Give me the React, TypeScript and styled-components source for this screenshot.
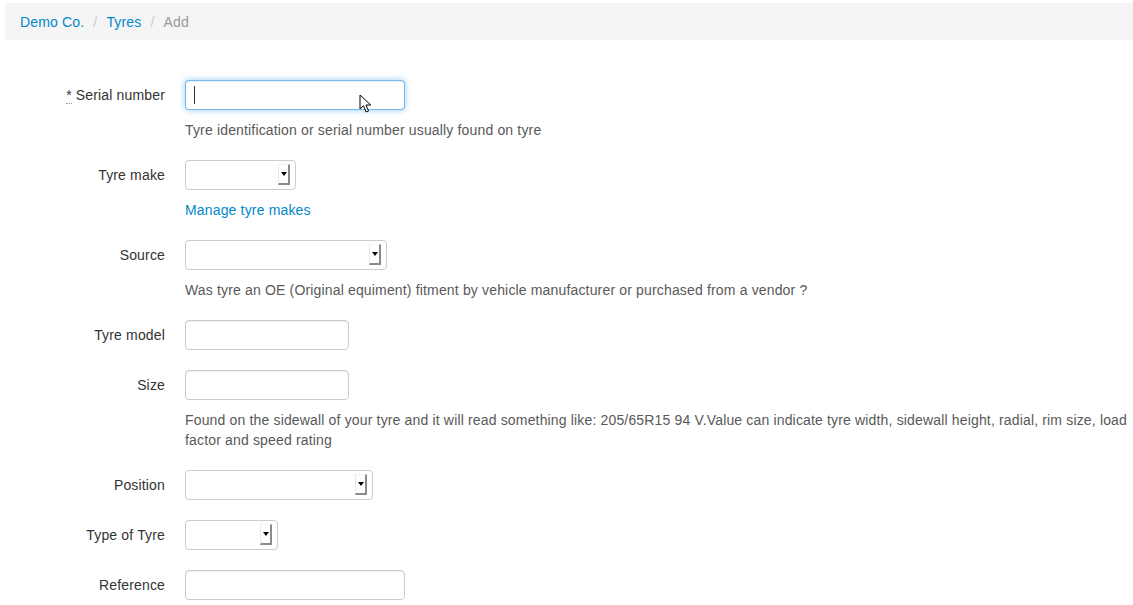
import React from "react";
import styled, { createGlobalStyle } from "styled-components";

const GlobalStyle = createGlobalStyle`
  html, body {
    margin: 0;
    padding: 0;
    background: #ffffff;
  }
  body {
    padding: 3px 0 0 5px;
    font-family: "Liberation Sans", Arial, sans-serif;
    font-size: 14px;
    line-height: 20px;
    letter-spacing: 0.16px;
    color: #333333;
  }
`;

const Breadcrumb = styled.ul`
  list-style: none;
  margin: 0 0 40px 0;
  padding: 8px 15px;
  background-color: #f5f5f5;
  border-radius: 4px 0 0 4px;
  display: flex;
  align-items: center;
  height: 21px;
`;

const Crumb = styled.li<{ $active?: boolean }>`
  color: ${(p) => (p.$active ? "#999999" : "#0088cc")};
`;

const Divider = styled.span`
  color: #cccccc;
  padding: 0 9px;
`;

const Form = styled.form`
  display: flex;
  flex-direction: column;
`;

const Row = styled.div`
  display: flex;
  margin-bottom: 20px;
`;

const Label = styled.label`
  width: 160px;
  flex-shrink: 0;
  text-align: right;
  padding-top: 5px;
  margin-right: 20px;
`;

const Required = styled.abbr`
  text-decoration: none;
  border-bottom: 1px dotted #999;
  cursor: help;
  margin-right: 4px;
`;

const Controls = styled.div`
  flex: 1;
  display: flex;
  flex-direction: column;
  padding-right: 2px;
`;

const TextInput = styled.div<{ $width: number; $focus?: boolean }>`
  position: relative;
  box-sizing: border-box;
  width: ${(p) => p.$width}px;
  height: 30px;
  border-radius: 4px;
  background: #fff;
  border: 1px solid ${(p) => (p.$focus ? "rgba(82,168,236,0.8)" : "#cccccc")};
  box-shadow: ${(p) =>
    p.$focus
      ? "inset 0 1px 1px rgba(0,0,0,.075), 0 0 6px rgba(82,168,236,.6)"
      : "inset 0 1px 1px rgba(0,0,0,.075)"};
`;

const Caret = styled.span`
  position: absolute;
  left: 8px;
  top: 5px;
  width: 1px;
  height: 18px;
  background: #333;
`;

const Pointer = styled.svg`
  position: absolute;
  left: 173px;
  top: 13px;
`;

const SelectBox = styled.div<{ $width: number }>`
  position: relative;
  box-sizing: border-box;
  width: ${(p) => p.$width}px;
  height: 30px;
  border-radius: 4px;
  background: #fff;
  border: 1px solid #cccccc;
`;

const ArrowButton = styled.span`
  position: absolute;
  right: 5px;
  top: 3px;
  width: 12px;
  height: 21px;
  box-sizing: border-box;
  background: #ffffff;
  border-left: 1px solid #e8e8e8;
  border-top: 1px solid #f2f2f2;
  border-right: 2px solid #8a8a8a;
  border-bottom: 2px solid #8a8a8a;
  display: flex;
  align-items: center;
  justify-content: center;
  &::after {
    content: "";
    width: 0;
    height: 0;
    border-left: 3px solid transparent;
    border-right: 3px solid transparent;
    border-top: 4px solid #000;
  }
`;

const Help = styled.span`
  display: block;
  margin-top: 10px;
  color: #595959;
`;

const HelpLink = styled.a`
  display: block;
  margin-top: 10px;
  color: #0088cc;
  text-decoration: none;
`;

const Select = ({ width }: { width: number }) => (
  <SelectBox $width={width}>
    <ArrowButton />
  </SelectBox>
);

export default function App() {
  return (
    <>
      <GlobalStyle />
      <Breadcrumb>
        <Crumb>Demo Co.</Crumb>
        <Divider>/</Divider>
        <Crumb>Tyres</Crumb>
        <Divider>/</Divider>
        <Crumb $active>Add</Crumb>
      </Breadcrumb>
      <Form>
        <Row>
          <Label>
            <Required title="required">*</Required>Serial number
          </Label>
          <Controls>
            <TextInput $width={220} $focus>
              <Caret />
              <Pointer width="13" height="20" viewBox="0 0 13 20">
                <path
                  d="M1 1 L1 15 L4.5 11.8 L7.2 18 L9.6 17 L7 11 L11.8 11 Z"
                  fill="#ffffff"
                  stroke="#000000"
                  strokeWidth="1"
                  strokeLinejoin="round"
                />
              </Pointer>
            </TextInput>
            <Help>Tyre identification or serial number usually found on tyre</Help>
          </Controls>
        </Row>
        <Row>
          <Label>Tyre make</Label>
          <Controls>
            <Select width={111} />
            <HelpLink href="#">Manage tyre makes</HelpLink>
          </Controls>
        </Row>
        <Row>
          <Label>Source</Label>
          <Controls>
            <Select width={202} />
            <Help>
              Was tyre an OE (Original equiment) fitment by vehicle manufacturer or purchased from a vendor ?
            </Help>
          </Controls>
        </Row>
        <Row>
          <Label>Tyre model</Label>
          <Controls>
            <TextInput $width={164} />
          </Controls>
        </Row>
        <Row>
          <Label>Size</Label>
          <Controls>
            <TextInput $width={164} />
            <Help>
              Found on the sidewall of your tyre and it will read something like: 205/65R15 94 V.Value can indicate
              tyre width, sidewall height, radial, rim size, load factor and speed rating
            </Help>
          </Controls>
        </Row>
        <Row>
          <Label>Position</Label>
          <Controls>
            <Select width={188} />
          </Controls>
        </Row>
        <Row>
          <Label>Type of Tyre</Label>
          <Controls>
            <Select width={93} />
          </Controls>
        </Row>
        <Row>
          <Label>Reference</Label>
          <Controls>
            <TextInput $width={220} />
          </Controls>
        </Row>
      </Form>
    </>
  );
}
